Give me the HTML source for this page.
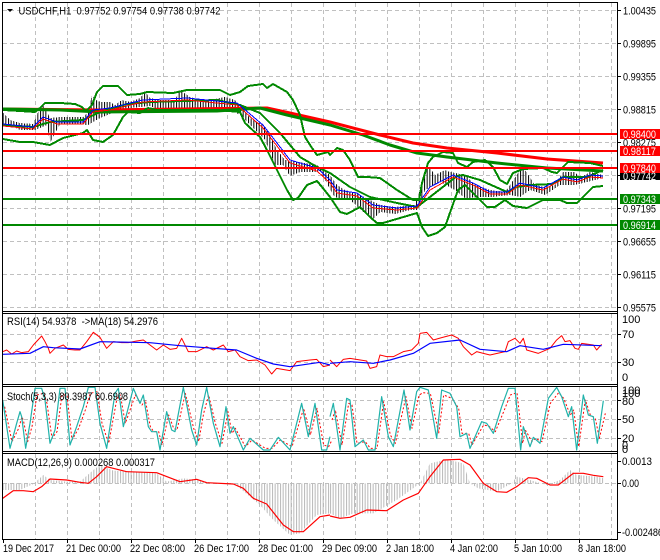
<!DOCTYPE html>
<html><head><meta charset="utf-8"><style>
html,body{margin:0;padding:0;background:#fff;width:660px;height:560px;overflow:hidden}
svg{display:block}
text{font-family:"Liberation Sans",sans-serif;font-size:11px;fill:#000}
polyline{fill:none;stroke-linejoin:round}
.s{vector-effect:non-scaling-stroke}
</style></head><body>
<svg width="660" height="560" viewBox="0 0 660 560" xmlns="http://www.w3.org/2000/svg">
<defs>
<pattern id="c" width="2.6667" height="10" patternUnits="userSpaceOnUse"><rect width="1" height="10" fill="#000"/></pattern>
<pattern id="h" width="8" height="30" patternUnits="userSpaceOnUse"><rect width="3" height="30" fill="#b8b8b8"/></pattern>
<clipPath id="st"><rect x="3" y="387" width="614" height="64"/></clipPath>
</defs>
<rect width="660" height="560" fill="#fff"/>
<!-- grid -->
<g fill="none" stroke="#c0c0c0" stroke-width="1" stroke-dasharray="4 3" shape-rendering="crispEdges">
<path d="M3 10.5H617M3 43.5H617M3 76.5H617M3 109.5H617M3 142.5H617M3 175.5H617M3 208.5H617M3 241.5H617M3 274.5H617M3 307.5H617M3 334.5H617M3 362.5H617M3 400.5H617M3 419.5H617M3 438.5H617M3 483.5H617"/>
<path d="M35.5 3V311M67.5 3V311M99.5 3V311M131.5 3V311M163.5 3V311M195.5 3V311M227.5 3V311M259.5 3V311M291.5 3V311M323.5 3V311M355.5 3V311M387.5 3V311M419.5 3V311M451.5 3V311M483.5 3V311M515.5 3V311M547.5 3V311M579.5 3V311M611.5 3V311"/>
<path d="M35.5 314V384M67.5 314V384M99.5 314V384M131.5 314V384M163.5 314V384M195.5 314V384M227.5 314V384M259.5 314V384M291.5 314V384M323.5 314V384M355.5 314V384M387.5 314V384M419.5 314V384M451.5 314V384M483.5 314V384M515.5 314V384M547.5 314V384M579.5 314V384M611.5 314V384"/>
<path d="M35.5 387V451M67.5 387V451M99.5 387V451M131.5 387V451M163.5 387V451M195.5 387V451M227.5 387V451M259.5 387V451M291.5 387V451M323.5 387V451M355.5 387V451M387.5 387V451M419.5 387V451M451.5 387V451M483.5 387V451M515.5 387V451M547.5 387V451M579.5 387V451M611.5 387V451"/>
<path d="M35.5 454V539M67.5 454V539M99.5 454V539M131.5 454V539M163.5 454V539M195.5 454V539M227.5 454V539M259.5 454V539M291.5 454V539M323.5 454V539M355.5 454V539M387.5 454V539M419.5 454V539M451.5 454V539M483.5 454V539M515.5 454V539M547.5 454V539M579.5 454V539M611.5 454V539"/>
</g>
<!-- candles -->
<polygon fill="url(#c)" shape-rendering="crispEdges" points="3,113 10,120 20,123 33,124 40,108 43,105 47,112 50,118 60,117 83,117 88,112 92,95 96,100 100,102 110,102 115,105 122,100 130,102 140,98 145,92 150,98 160,100 175,100 180,90 190,97 200,100 215,99 225,97 235,100 240,108 250,118 263,125 270,135 277,150 285,160 300,162 317,165 322,170 330,175 337,185 345,190 360,195 370,200 380,205 395,207 415,205 420,190 428,165 435,175 445,170 450,172 465,175 475,185 490,190 505,192 510,185 520,170 525,170 535,185 545,187 555,185 563,172 575,172 580,178 590,172 603,175 603,178 595,180 575,185 560,185 545,195 530,190 520,197 510,195 492,197 478,197 470,198 465,198 455,190 440,182 425,190 418,210 410,210 395,214 380,212 372,220 368,216 350,200 340,200 333,195 320,170 315,172 300,172 290,176 283,165 275,165 265,140 250,125 240,115 225,107 210,108 195,112 175,108 160,110 150,106 130,108 115,112 100,118 88,125 75,124 60,124 50,143 47,125 35,130 20,130 10,125 3,125"/>
<!-- MAs -->
<polyline stroke="#f00" stroke-width="3" points="3,109 100,110 267,108 290,113 330,122 380,135 413,143 447,148 497,153 547,159 603,163"/>
<polyline stroke="#080" stroke-width="3" points="3,109 60,110 100,112 217,111 260,108 287,115 330,125 363,135 390,145 417,153 447,157 497,163 547,168 603,171"/>
<!-- Bollinger -->
<g stroke="#080" stroke-width="2" fill="none" shape-rendering="crispEdges">
<polyline points="3,110 20,111 35,112 40,108 45,103 60,103 75,104 82,107 86,111 92,105 97,92 103,86 118,86 127,95 140,94 147,92 173,93 187,90 220,90 230,95 240,92 248,86 263,84 267,88 273,84 287,92 293,100 300,115 305,137 312,148 317,155 328,152 330,155 337,148 343,150 350,160 358,177 367,177 380,178 397,190 413,200 419,200 422,183 428,163 433,157 443,152 453,153 458,163 467,167 473,162 485,160 493,167 500,180 507,184 513,173 523,169 543,168 552,172 557,173 563,167 568,162 590,163 603,166"/>
<polyline points="3,139 20,142 33,142 50,145 63,138 83,133 87,130 93,140 103,142 113,135 123,117 128,112 140,113 148,108 157,110 217,110 240,112 245,123 260,137 267,150 277,170 287,190 293,200 298,198 307,185 317,181 322,187 330,197 340,212 347,214 360,207 370,217 377,223 383,223 400,218 417,213 422,227 428,236 437,233 445,227 452,207 458,190 465,185 477,197 487,207 495,207 505,200 513,206 527,208 543,200 560,200 567,203 577,203 593,187 603,186"/>
<polyline points="3,125 33,127 50,122 83,120 100,112 127,104 150,102 217,100 240,105 260,113 280,133 300,157 317,167 330,173 350,187 370,197 397,203 417,207 430,197 457,176 463,175 480,180 507,192 517,187 530,185 553,184 563,177 587,177 603,170"/>
</g>
<!-- fast MAs -->
<polyline stroke="#f00" stroke-width="1" shape-rendering="crispEdges" points="3,126 33,129 43,119 57,124 83,124 93,112 110,110 143,102 187,100 237,105 263,128 277,146 290,163 317,171 330,183 337,193 357,196 373,208 397,210 417,208 430,190 453,177 473,185 490,194 507,194 520,185 543,190 563,179 577,182 590,177 603,178"/>
<polyline stroke="#00f" stroke-width="1" shape-rendering="crispEdges" points="3,124 33,127 43,117 57,122 83,122 93,110 110,108 143,100 187,98 237,103 263,125 277,143 290,160 317,168 330,180 337,190 357,193 373,205 397,208 417,206 430,187 453,175 473,183 490,192 507,192 520,183 543,188 563,177 577,180 590,175 603,176"/>
<!-- levels -->
<g shape-rendering="crispEdges">
<rect x="3" y="133" width="614" height="2" fill="#f00"/>
<rect x="3" y="150" width="614" height="2" fill="#f00"/>
<rect x="3" y="167" width="614" height="2" fill="#f00"/>
<rect x="3" y="198" width="614" height="2" fill="#080"/>
<rect x="3" y="224" width="614" height="2" fill="#080"/>
</g>
<!-- RSI -->
<g transform="translate(0,300) scale(.33333)">
<polyline class="s" stroke="#f00" stroke-width="1" points="8,155 20,150 35,162 50,153 65,158 85,155 100,135 125,108 135,125 145,145 150,160 165,145 190,135 205,148 225,150 240,150 260,125 280,97 300,112 320,145 340,125 365,128 385,128 410,123 430,120 450,135 470,150 490,135 510,148 530,145 545,115 565,155 590,155 620,140 640,150 670,135 685,155 705,150 720,170 745,182 770,180 795,195 815,222 830,205 870,212 890,185 930,180 950,178 970,200 990,195"/>
<polyline class="s" stroke="#00f" stroke-width="1.2" points="8,163 90,160 130,140 160,143 240,147 300,125 450,128 540,137 640,145 710,150 770,175 820,192 870,200 960,187 990,195"/>
</g>
<g transform="translate(330,300) scale(.33333)">
<polyline class="s" stroke="#f00" stroke-width="1" points="0,180 20,200 40,178 60,175 110,183 120,205 140,200 150,165 170,170 190,170 220,155 245,150 265,130 270,100 290,97 310,120 335,113 365,105 385,115 400,140 425,165 440,155 460,160 480,165 525,155 535,125 555,115 570,130 580,115 590,150 625,160 660,145 680,120 695,107 705,125 720,122 735,145 745,148 755,130 790,135 800,150 815,133"/>
<polyline class="s" stroke="#00f" stroke-width="1.2" points="0,190 60,185 130,190 180,180 250,160 300,130 390,120 450,148 530,155 570,137 640,148 700,133 815,137"/>
</g>
<!-- Stoch -->
<g clip-path="url(#st)">
<g transform="translate(2,300) scale(.33333)">
<polyline class="s" stroke="#f00" stroke-width="1" stroke-dasharray="2 2" points="8,320 30,425 50,385 60,350 65,365 77,425 90,380 105,285 125,280 135,310 150,415 165,395 180,285 195,285 210,420 230,385 250,330 265,280 285,275 300,370 320,430 345,295 355,285 370,370 400,285 420,315 430,300 445,380 455,395 470,395 480,435 500,345 515,385 525,390 550,280 575,385 590,425 605,340 620,285 640,370 660,430 678,335 690,400 700,385 730,440 750,420 790,445 810,445 835,420 870,440 905,325 925,405 945,325 965,435 980,440 990,420"/>
</g>
<g transform="translate(332,300) scale(.33333)">
<polyline class="s" stroke="#f00" stroke-width="1" stroke-dasharray="2 2" points="0,360 10,330 30,435 50,310 60,315 75,430 100,425 115,445 135,445 155,305 175,405 190,430 222,290 240,385 260,290 270,278 295,280 320,400 335,285 360,295 380,325 390,400 410,400 420,435 455,375 470,378 490,395 515,335 535,285 555,278 572,430 580,390 600,425 610,415 630,425 655,310 680,278 695,295 715,345 725,330 740,440 760,300 775,345 790,355 802,415 820,340"/>
</g>
<g transform="translate(0,300) scale(.33333)">
<polyline class="s" stroke="#20b2aa" stroke-width="1.2" points="8,300 30,445 50,370 60,335 65,350 77,445 90,370 105,265 125,265 135,300 150,430 165,390 180,265 195,265 210,435 230,380 250,320 265,262 285,262 300,370 320,445 345,280 355,265 370,380 400,265 420,310 430,285 445,380 455,395 470,395 480,450 500,335 515,390 525,395 550,262 575,390 590,435 605,330 620,262 640,370 660,440 678,320 690,400 700,380 730,450 750,415 790,450 810,450 835,412 870,450 905,310 925,410 945,310 965,450 980,450 990,410"/>
</g>
<g transform="translate(330,300) scale(.33333)">
<polyline class="s" stroke="#20b2aa" stroke-width="1.2" points="0,350 10,310 30,450 50,295 60,300 75,440 100,420 115,450 135,450 155,290 175,410 190,440 222,270 240,390 260,275 270,262 295,270 320,415 335,270 360,280 380,320 390,410 410,400 420,445 455,365 470,370 490,400 515,320 535,265 555,265 572,450 580,380 600,440 610,412 630,430 655,295 680,262 695,290 715,350 725,320 740,450 760,285 775,345 790,350 802,430 820,302"/>
</g>
</g>
<!-- MACD -->
<g transform="translate(0,300) scale(.33333)">
<polygon fill="url(#h)" points="9,550 9,570 60,570 100,552 130,525 150,540 200,545 240,545 280,510 300,495 340,512 400,515 470,520 500,545 550,535 600,540 640,550 700,550 720,565 780,615 820,660 870,705 900,700 950,645 990,640 990,550"/>
<polyline class="s" stroke="#f00" stroke-width="1.2" points="8,595 40,572 70,572 100,575 125,560 150,537 200,540 240,547 265,550 290,530 320,500 380,515 470,518 540,545 590,538 620,548 700,552 730,565 760,595 800,612 850,675 880,695 910,695 960,650 990,645"/>
</g>
<g transform="translate(330,300) scale(.33333)">
<polygon fill="url(#h)" points="0,550 0,640 30,655 70,640 130,640 200,600 270,550 300,490 350,478 400,490 420,550 445,565 500,575 545,550 560,530 600,540 650,555 690,540 720,510 740,525 800,530 822,535 822,550"/>
<polyline class="s" stroke="#f00" stroke-width="1.2" points="0,648 30,655 60,652 110,630 170,632 220,600 265,580 300,530 340,480 390,478 420,495 460,550 500,575 530,577 560,560 595,533 620,535 660,555 685,555 730,520 760,520 790,526 820,530"/>
</g>
<!-- frames -->
<g fill="#000" shape-rendering="crispEdges">
<rect x="2" y="2" width="616" height="1"/>
<rect x="2" y="2" width="1" height="538"/>
<rect x="617" y="2" width="1" height="538"/>
<rect x="2" y="311" width="616" height="1"/>
<rect x="2" y="313" width="616" height="1"/>
<rect x="2" y="384" width="616" height="1"/>
<rect x="2" y="386" width="616" height="1"/>
<rect x="2" y="451" width="616" height="1"/>
<rect x="2" y="453" width="616" height="1"/>
<rect x="2" y="539" width="616" height="1"/>
<path d="M618 10h3v1h-3zM618 43h3v1h-3zM618 76h3v1h-3zM618 109h3v1h-3zM618 142h3v1h-3zM618 175h3v1h-3zM618 208h3v1h-3zM618 241h3v1h-3zM618 274h3v1h-3zM618 307h3v1h-3zM618 334h3v1h-3zM618 362h3v1h-3zM618 400h3v1h-3zM618 419h3v1h-3zM618 438h3v1h-3zM618 483h3v1h-3zM618 461h3v1h-3zM618 532h3v1h-3zM3 540h1v3h-1zM67 540h1v3h-1zM131 540h1v3h-1zM195 540h1v3h-1zM259 540h1v3h-1zM323 540h1v3h-1zM387 540h1v3h-1zM451 540h1v3h-1zM515 540h1v3h-1zM579 540h1v3h-1z"/>
</g>
<!-- title -->
<path d="M7 9h6l-3 3z" fill="#000"/>
<text x="18.5" y="14.5" textLength="202" lengthAdjust="spacingAndGlyphs" xml:space="preserve">USDCHF,H1  0.97752 0.97754 0.97738 0.97742</text>
<text x="7" y="325" textLength="151" lengthAdjust="spacingAndGlyphs" xml:space="preserve">RSI(14) 54.9378  -&gt;MA(18) 54.2976</text>
<text x="7" y="400" textLength="121" lengthAdjust="spacingAndGlyphs">Stoch(5,3,3) 80.3987 60.6908</text>
<text x="7" y="466" textLength="148" lengthAdjust="spacingAndGlyphs">MACD(12,26,9) 0.000268 0.000317</text>
<!-- price axis -->
<g>
<text x="623" y="14.5" textLength="33" lengthAdjust="spacingAndGlyphs">1.00435</text>
<text x="623" y="47.5" textLength="33" lengthAdjust="spacingAndGlyphs">0.99895</text>
<text x="623" y="80.5" textLength="33" lengthAdjust="spacingAndGlyphs">0.99355</text>
<text x="623" y="113.5" textLength="33" lengthAdjust="spacingAndGlyphs">0.98815</text>
<text x="623" y="146.5" textLength="33" lengthAdjust="spacingAndGlyphs">0.98275</text>
<text x="623" y="212.5" textLength="33" lengthAdjust="spacingAndGlyphs">0.97195</text>
<text x="623" y="245.5" textLength="33" lengthAdjust="spacingAndGlyphs">0.96655</text>
<text x="623" y="278.5" textLength="33" lengthAdjust="spacingAndGlyphs">0.96115</text>
<text x="623" y="311.5" textLength="33" lengthAdjust="spacingAndGlyphs">0.95575</text>
</g>
<g shape-rendering="crispEdges">
<rect x="620" y="172" width="40" height="8" fill="#000"/>
<rect x="620" y="129" width="40" height="10" fill="#f00"/>
<rect x="620" y="146" width="40" height="10" fill="#f00"/>
<rect x="620" y="163" width="40" height="10" fill="#f00"/>
<rect x="620" y="194" width="40" height="10" fill="#080"/>
<rect x="620" y="220" width="40" height="10" fill="#080"/>
</g>
<g>
<text x="623" y="180" textLength="33" lengthAdjust="spacingAndGlyphs" style="fill:#fff">0.97742</text>
<text x="623" y="138" textLength="33" lengthAdjust="spacingAndGlyphs" style="fill:#fff">0.98400</text>
<text x="623" y="155" textLength="33" lengthAdjust="spacingAndGlyphs" style="fill:#fff">0.98117</text>
<text x="623" y="172" textLength="33" lengthAdjust="spacingAndGlyphs" style="fill:#fff">0.97840</text>
<text x="623" y="203" textLength="33" lengthAdjust="spacingAndGlyphs" style="fill:#fff">0.97343</text>
<text x="623" y="229" textLength="33" lengthAdjust="spacingAndGlyphs" style="fill:#fff">0.96914</text>
</g>
<!-- sub axes -->
<text x="622" y="323">100</text>
<text x="622" y="338">70</text>
<text x="622" y="366">30</text>
<text x="622" y="381">0</text>
<text x="622" y="394">100</text>
<text x="622" y="397">100</text>
<text x="622" y="405">80</text>
<text x="622" y="423">50</text>
<text x="622" y="442">20</text>
<text x="622" y="449">0</text>
<text x="622" y="453">0</text>
<text x="622" y="465" textLength="30" lengthAdjust="spacingAndGlyphs">0.0013</text>
<text x="622" y="487" textLength="17" lengthAdjust="spacingAndGlyphs">0.00</text>
<text x="622" y="536" textLength="41" lengthAdjust="spacingAndGlyphs">-0.002486</text>
<!-- time axis -->
<g>
<text x="3" y="552" textLength="51" lengthAdjust="spacingAndGlyphs">19 Dec 2017</text>
<text x="66" y="552" textLength="55" lengthAdjust="spacingAndGlyphs">21 Dec 00:00</text>
<text x="130" y="552" textLength="55" lengthAdjust="spacingAndGlyphs">22 Dec 08:00</text>
<text x="194" y="552" textLength="55" lengthAdjust="spacingAndGlyphs">26 Dec 17:00</text>
<text x="258" y="552" textLength="55" lengthAdjust="spacingAndGlyphs">28 Dec 01:00</text>
<text x="322" y="552" textLength="55" lengthAdjust="spacingAndGlyphs">29 Dec 09:00</text>
<text x="386" y="552" textLength="48" lengthAdjust="spacingAndGlyphs">2 Jan 18:00</text>
<text x="450" y="552" textLength="48" lengthAdjust="spacingAndGlyphs">4 Jan 02:00</text>
<text x="514" y="552" textLength="48" lengthAdjust="spacingAndGlyphs">5 Jan 10:00</text>
<text x="578" y="552" textLength="48" lengthAdjust="spacingAndGlyphs">8 Jan 18:00</text>
</g>
</svg>
</body></html>
